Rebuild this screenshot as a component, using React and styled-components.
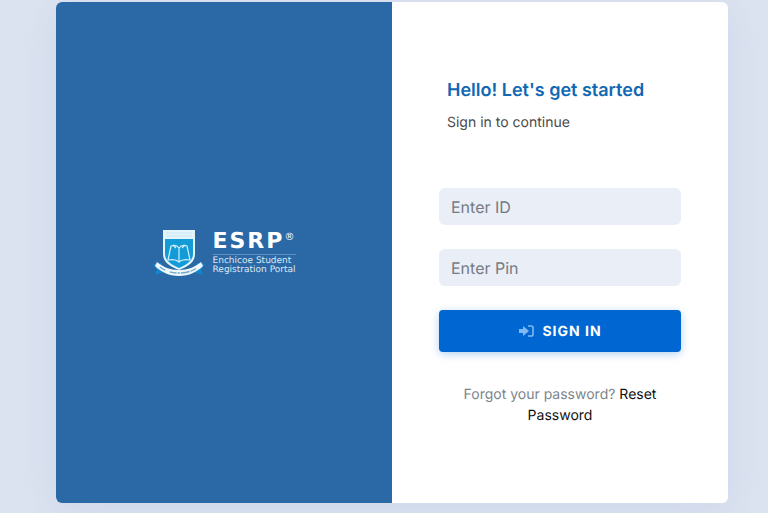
import React from "react";
import styled, { createGlobalStyle } from "styled-components";

const App = () => {
  return (
    <>
      <GlobalStyle />
      <Page>
        <Card>
          <BrandPanel>
            <Brand>
              <Crest />
              <BrandText>
                <BrandName>
                  ESRP<Registered>®</Registered>
                </BrandName>
                <BrandLine>Enchicoe Student</BrandLine>
                <BrandLine>Registration Portal</BrandLine>
              </BrandText>
            </Brand>
          </BrandPanel>
          <FormPanel>
            <Intro>
              <Title>Hello! Let's get started</Title>
              <SubTitle>Sign in to continue</SubTitle>
            </Intro>
            <Form onSubmit={(e) => e.preventDefault()}>
              <Input type="text" placeholder="Enter ID" aria-label="Enter ID" />
              <Input
                type="password"
                placeholder="Enter Pin"
                aria-label="Enter Pin"
              />
              <SubmitBtn type="submit">
                <SignInIcon />
                SIGN IN
              </SubmitBtn>
            </Form>
            <Forgot>
              Forgot your password? <ResetLink href="#">Reset Password</ResetLink>
            </Forgot>
          </FormPanel>
        </Card>
      </Page>
    </>
  );
};

export default App;

const Crest = () => (
  <CrestSvg viewBox="0 0 52 48" aria-hidden="true">
    {/* ribbon tails */}
    <path d="M0 35l8-1 3 9-9 3 2-5z" fill="#1187cd" />
    <path d="M52 35l-8-1-3 9 9 3-2-5z" fill="#1187cd" />
    {/* shield */}
    <path
      d="M10 1h32v24c0 8-6 12-16 16C16 37 10 33 10 25z"
      fill="#e4f4fb"
    />
    <path d="M12 10h28v15c0 6-5 10-14 14-9-4-14-8-14-14z" fill="#139bd8" />
    <path d="M13 4h26M13 7h26" stroke="#c9e6f4" strokeWidth="1" />
    {/* open book */}
    <path
      d="M26 19c-2-3-5-3-8-2l-3 14c5-1 8-1 11 2 3-3 6-3 11-2l-3-14c-3-1-6-1-8 2zM26 19v14M20 16l3 3M32 16l-3 3"
      fill="none"
      stroke="#d3effb"
      strokeWidth="1.2"
      strokeLinejoin="round"
    />
    {/* ribbon */}
    <path
      d="M4 33c6 5 13 8 22 8s16-3 22-8l2 4c-6 6-14 10-24 10S8 43 2 37z"
      fill="#eef8fc"
    />
    <path
      d="M7 38c5 4 11 6 19 6s14-2 19-6"
      fill="none"
      stroke="#73aacb"
      strokeWidth="1.4"
      strokeDasharray="6 5 7 1 2 1 9 1"
    />
  </CrestSvg>
);

const SignInIcon = () => (
  <IconSvg viewBox="0 0 16 14" aria-hidden="true">
    <path d="M1 5h4V2l6 5-6 5V9H1z" fill="currentColor" />
    <path
      d="M10 2h3c1 0 2 .6 2 1.6v6.8c0 1-1 1.6-2 1.6h-3"
      fill="none"
      stroke="currentColor"
      strokeWidth="1.6"
    />
  </IconSvg>
);

const GlobalStyle = createGlobalStyle`
  * {
    box-sizing: border-box;
  }

  body {
    margin: 0;
    background: #dce3f0;
    font-family: "Inter", sans-serif;
    text-rendering: geometricPrecision;
  }
`;

const Page = styled.main`
  min-height: 100vh;
  padding: 2px 40px 9px 56px;

  @media (max-width: 600px) {
    padding: 16px;
  }
`;

const Card = styled.div`
  display: grid;
  grid-template-columns: 1fr 1fr;
  overflow: hidden;
  background: #ffffff;
  border-radius: 6px;
  box-shadow: 0 8px 40px rgba(150, 170, 215, 0.2);

  @media (max-width: 600px) {
    grid-template-columns: 1fr;
  }
`;

const BrandPanel = styled.section`
  display: flex;
  align-items: center;
  justify-content: center;
  padding: 24px;
  background: #2b68a6;
`;

const Brand = styled.div`
  display: flex;
  align-items: center;
  gap: 8px;
  color: #ffffff;
`;

const CrestSvg = styled.svg`
  width: 52px;
  height: 48px;
`;

const BrandText = styled.div`
  display: flex;
  flex-direction: column;
  font-family: "DejaVu Sans", sans-serif;
`;

const BrandName = styled.div`
  display: flex;
  align-items: flex-start;
  margin-bottom: 2px;
  border-bottom: 1px solid #5f90c1;
  font-size: 22px;
  font-weight: 700;
  line-height: 24px;
  letter-spacing: 2px;
`;

const Registered = styled.span`
  font-size: 10px;
  font-weight: 400;
  line-height: 16px;
  letter-spacing: 0;
`;

const BrandLine = styled.span`
  color: #dce8f4;
  font-size: 9px;
  line-height: 9px;
`;

const FormPanel = styled.section`
  padding: 78px 47px 77px;
`;

const Intro = styled.div`
  padding: 0 8px;
  margin-bottom: 55px;
`;

const Title = styled.h1`
  margin: 0 0 10px;
  color: #1068b3;
  font-size: 18px;
  font-weight: 600;
  line-height: 22px;
`;

const SubTitle = styled.p`
  margin: 0;
  color: #4a4a4a;
  font-size: 14px;
  line-height: 21px;
`;

const Form = styled.form`
  display: flex;
  flex-direction: column;
  gap: 24px;
`;

const Input = styled.input`
  width: 100%;
  height: 37px;
  padding: 0 12px;
  border: none;
  border-radius: 6px;
  background: #eaeff7;
  color: #212529;
  font-family: inherit;
  font-size: 16px;
  text-rendering: inherit;

  &::placeholder {
    color: #747b84;
    opacity: 1;
  }
`;

const SubmitBtn = styled.button`
  display: flex;
  align-items: center;
  justify-content: center;
  gap: 8px;
  width: 100%;
  height: 42px;
  border: none;
  border-radius: 4px;
  background: #0067d2;
  box-shadow: 0 2px 8px rgba(0, 103, 210, 0.3);
  color: #ffffff;
  font-family: inherit;
  font-size: 14px;
  font-weight: 700;
  letter-spacing: 1px;
  text-rendering: inherit;
  cursor: pointer;
`;

const IconSvg = styled.svg`
  width: 16px;
  height: 14px;
  color: #80b8f0;
`;

const Forgot = styled.p`
  margin: 32px 0 0;
  padding: 0 16px;
  color: #7d848b;
  font-size: 14px;
  line-height: 21px;
  text-align: center;
`;

const ResetLink = styled.a`
  color: #101010;
  text-decoration: none;
`;
